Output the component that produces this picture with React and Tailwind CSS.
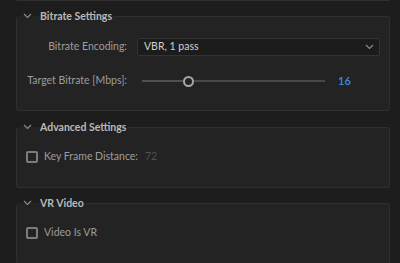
import React from 'react';

const font = { fontFamily: 'Lato, "Open Sans", "Liberation Sans", sans-serif' };

const Chevron = () => (
  <svg width="9" height="6" viewBox="0 0 9 6" className="text-[#8a8a8a]">
    <path d="M1 1l3.5 3.5L8 1" fill="none" stroke="currentColor" strokeWidth="1.2" />
  </svg>
);

const Section = ({ title, children, className }) => (
  <fieldset className={`border border-[#303030] rounded-[3px] bg-[#232323] ${className}`}>
    <legend className="flex items-center h-[14px] pl-[6px] pr-[2px]">
      <Chevron />
      <span className="ml-[8px] text-[10.5px] font-bold text-[#b9b9b9] leading-[14px]">{title}</span>
    </legend>
    {children}
  </fieldset>
);

const Checkbox = ({ label, value }) => (
  <div className="flex items-center pl-[9px]">
    <span className="w-[12px] h-[12px] border-2 border-[#7c7c7c] rounded-[2px]" />
    <span className="ml-[6px] text-[10.5px] text-[#9d9d9d]">{label}</span>
    {value && <span className="ml-[7px] text-[10.5px] text-[#4f4f4f]">{value}</span>}
  </div>
);

export default function App() {
  return (
    <div style={font} className="w-[400px] h-[263px] bg-[#1d1d1d] overflow-hidden pl-[16px] pr-[10px]">
      <div className="h-[2px] border-b border-x border-[#303030] rounded-b-[3px] bg-[#232323] -mt-px" />

      <Section title="Bitrate Settings" className="mt-[8px] h-[102px]">
        <div className="grid grid-cols-[110px_1fr] items-center gap-x-[10px] pr-[9px] pt-[15px]">
          <span className="text-right text-[10.5px] text-[#9d9d9d]">Bitrate Encoding:</span>
          <div className="h-[18px] flex items-center justify-between bg-[#1c1c1c] border border-[#333] rounded-[2px] pl-[6px] pr-[5px]">
            <span className="text-[10.5px] text-[#d2d2d2]">VBR, 1 pass</span>
            <Chevron />
          </div>
          <span className="text-right text-[10.5px] text-[#9d9d9d] mt-[17px] whitespace-nowrap">Target Bitrate [Mbps]:</span>
          <div className="flex items-center mt-[17px]">
            <div className="flex items-center w-[193px] pl-[5px] pr-[5px]">
              <div className="flex-1 flex items-center">
                <div className="w-[41px] h-[2px] bg-[#505050]" />
                <div className="w-[11px] h-[11px] rounded-full border-2 border-[#a8a8a8] bg-[#232323] shrink-0" />
                <div className="flex-1 h-[2px] bg-[#484848]" />
              </div>
            </div>
            <span className="ml-[8px] text-[11px] font-semibold text-[#3d8ee2]">16</span>
          </div>
        </div>
      </Section>

      <Section title="Advanced Settings" className="mt-[9px] h-[68px]">
        <div className="pt-[15px]">
          <Checkbox label="Key Frame Distance:" value="72" />
        </div>
      </Section>

      <Section title="VR Video" className="mt-[8px] h-[68px]">
        <div className="pt-[15px]">
          <Checkbox label="Video Is VR" />
        </div>
      </Section>
    </div>
  );
}
